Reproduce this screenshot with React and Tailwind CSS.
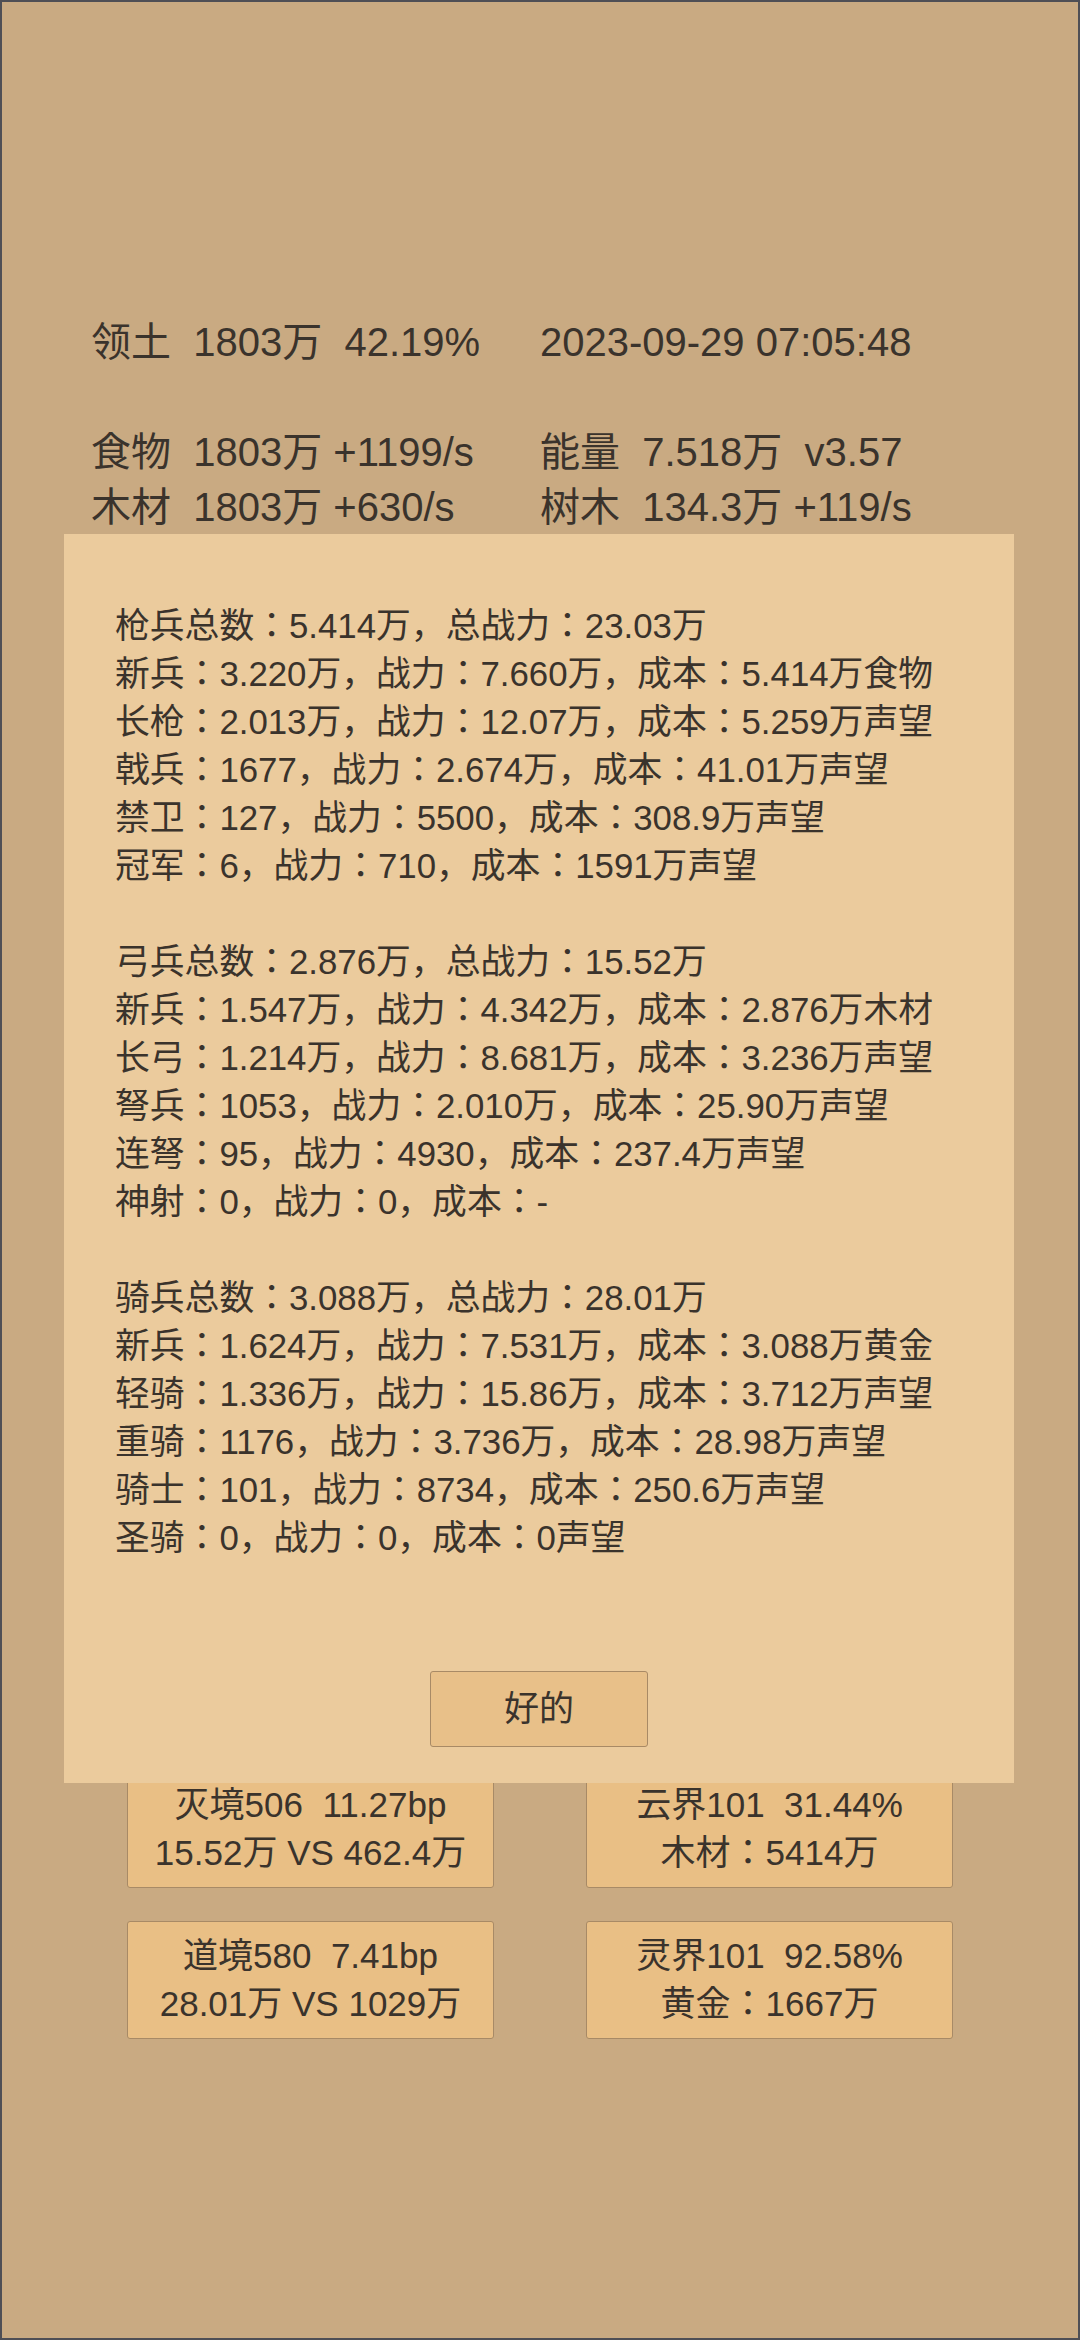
const header = [
  ["领土  1803万  42.19%", "2023-09-29 07:05:48"],
  null,
  ["食物  1803万 +1199/s", "能量  7.518万  v3.57"],
  ["木材  1803万 +630/s", "树木  134.3万 +119/s"],
];

const cards = [
  ["灭境506  11.27bp", "15.52万 VS 462.4万"],
  ["云界101  31.44%", "木材：5414万"],
  ["道境580  7.41bp", "28.01万 VS 1029万"],
  ["灵界101  92.58%", "黄金：1667万"],
];

const report = [
  "枪兵总数：5.414万，总战力：23.03万",
  "新兵：3.220万，战力：7.660万，成本：5.414万食物",
  "长枪：2.013万，战力：12.07万，成本：5.259万声望",
  "戟兵：1677，战力：2.674万，成本：41.01万声望",
  "禁卫：127，战力：5500，成本：308.9万声望",
  "冠军：6，战力：710，成本：1591万声望",
  "",
  "弓兵总数：2.876万，总战力：15.52万",
  "新兵：1.547万，战力：4.342万，成本：2.876万木材",
  "长弓：1.214万，战力：8.681万，成本：3.236万声望",
  "弩兵：1053，战力：2.010万，成本：25.90万声望",
  "连弩：95，战力：4930，成本：237.4万声望",
  "神射：0，战力：0，成本：-",
  "",
  "骑兵总数：3.088万，总战力：28.01万",
  "新兵：1.624万，战力：7.531万，成本：3.088万黄金",
  "轻骑：1.336万，战力：15.86万，成本：3.712万声望",
  "重骑：1176，战力：3.736万，成本：28.98万声望",
  "骑士：101，战力：8734，成本：250.6万声望",
  "圣骑：0，战力：0，成本：0声望",
];

export default function App() {
  return (
    <div
      className="relative h-[2340px] border-2 border-[#4f4f55] bg-[#c9aa82] text-[#3a332c]"
      style={{ fontFamily: '"Liberation Sans", "Noto Sans CJK JP", sans-serif' }}
    >
      {/* top stats */}
      <div className="grid grid-cols-2 px-[89px] pt-[313px] text-[40px] leading-[55px] whitespace-pre">
        {header.map((row, i) =>
          row ? (
            <div key={i} className="contents">
              <div>{row[0]}</div>
              <div>{row[1]}</div>
            </div>
          ) : (
            <div key={i} className="col-span-2 h-[55px]" />
          )
        )}
      </div>

      {/* realm cards */}
      <div className="mt-[1235px] grid grid-cols-2 gap-x-[92px] gap-y-[33px] px-[125px]">
        {cards.map((c, i) => (
          <div
            key={i}
            className="rounded-[3px] border border-[#a88a66] bg-[#e9bf85] py-[10px] text-center text-[35px] leading-[48px] whitespace-pre"
          >
            <div>{c[0]}</div>
            <div>{c[1]}</div>
          </div>
        ))}
      </div>

      {/* dialog */}
      <div className="absolute left-[62px] top-[532px] flex h-[1249px] w-[950px] flex-col bg-[#ebcb9d] pl-[51px] pt-[68px] pb-[36px]">
        <div className="text-[34.8px] leading-[48px] whitespace-pre">
          {report.map((line, i) => (
            <div key={i} className="h-[48px]">
              {line}
            </div>
          ))}
        </div>
        <div className="mt-auto flex justify-center pr-[51px]">
          <button className="h-[76px] w-[218px] rounded-[3px] border border-[#a88a66] bg-[#e8c089] text-[35px] text-[#3a332c]">
            好的
          </button>
        </div>
      </div>
    </div>
  );
}
